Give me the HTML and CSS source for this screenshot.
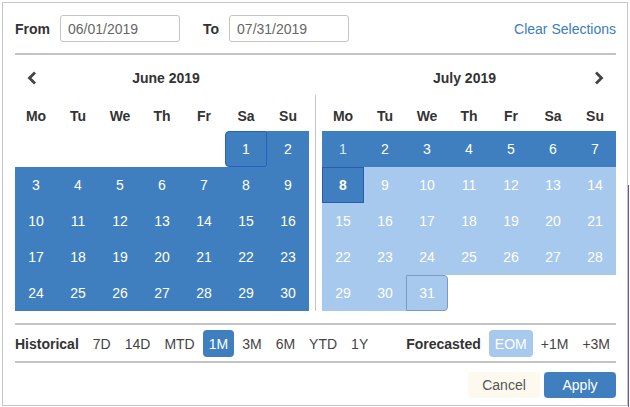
FILE: index.html
```html
<!DOCTYPE html>
<html>
<head>
<meta charset="utf-8">
<link rel="stylesheet" href="styles.css">
</head>
<body>
<div class="panel">
  <div class="range-row">
    <span class="lbl">From</span>
    <input class="date-input first" type="text" value="06/01/2019">
    <span class="lbl">To</span>
    <input class="date-input" type="text" value="07/31/2019">
    <a class="clear-link">Clear Selections</a>
  </div>
  <div class="rule rule-top"></div>

  <div class="calendars">
    <div class="month">
      <div class="month-head left">
        <svg class="chev chev-prev" width="10" height="14" viewBox="0 0 10 14"><path d="M8 1.5 L2.5 7 L8 12.5" fill="none" stroke="#444" stroke-width="2.8"/></svg>
        <span class="month-title">June 2019</span>
      </div>
      <div class="dow"><span>Mo</span><span>Tu</span><span>We</span><span>Th</span><span>Fr</span><span>Sa</span><span>Su</span></div>
      <div class="grid">
        <span class="cell empty"></span><span class="cell empty"></span><span class="cell empty"></span><span class="cell empty"></span><span class="cell empty"></span>
        <span class="cell dark start">1</span><span class="cell dark">2</span>
        <span class="cell dark">3</span><span class="cell dark">4</span><span class="cell dark">5</span><span class="cell dark">6</span><span class="cell dark">7</span><span class="cell dark">8</span><span class="cell dark">9</span>
        <span class="cell dark">10</span><span class="cell dark">11</span><span class="cell dark">12</span><span class="cell dark">13</span><span class="cell dark">14</span><span class="cell dark">15</span><span class="cell dark">16</span>
        <span class="cell dark">17</span><span class="cell dark">18</span><span class="cell dark">19</span><span class="cell dark">20</span><span class="cell dark">21</span><span class="cell dark">22</span><span class="cell dark">23</span>
        <span class="cell dark">24</span><span class="cell dark">25</span><span class="cell dark">26</span><span class="cell dark">27</span><span class="cell dark">28</span><span class="cell dark">29</span><span class="cell dark">30</span>
      </div>
    </div>

    <div class="sep"><div class="sep-line"></div></div>

    <div class="month">
      <div class="month-head right">
        <span class="month-title">July 2019</span>
        <svg class="chev chev-next" width="10" height="14" viewBox="0 0 10 14"><path d="M2 1.5 L7.5 7 L2 12.5" fill="none" stroke="#444" stroke-width="2.8"/></svg>
      </div>
      <div class="dow"><span>Mo</span><span>Tu</span><span>We</span><span>Th</span><span>Fr</span><span>Sa</span><span>Su</span></div>
      <div class="grid">
        <span class="cell dark dim">1</span><span class="cell dark">2</span><span class="cell dark">3</span><span class="cell dark">4</span><span class="cell dark">5</span><span class="cell dark">6</span><span class="cell dark">7</span>
        <span class="cell dark today">8</span><span class="cell light">9</span><span class="cell light">10</span><span class="cell light">11</span><span class="cell light">12</span><span class="cell light">13</span><span class="cell light">14</span>
        <span class="cell light">15</span><span class="cell light">16</span><span class="cell light">17</span><span class="cell light">18</span><span class="cell light">19</span><span class="cell light">20</span><span class="cell light">21</span>
        <span class="cell light">22</span><span class="cell light">23</span><span class="cell light">24</span><span class="cell light">25</span><span class="cell light">26</span><span class="cell light">27</span><span class="cell light">28</span>
        <span class="cell light">29</span><span class="cell light">30</span><span class="cell light end">31</span>
        <span class="cell empty"></span><span class="cell empty"></span><span class="cell empty"></span><span class="cell empty"></span>
      </div>
    </div>
  </div>

  <div class="rule rule-mid"></div>

  <div class="presets">
    <div class="group">
      <span class="group-lbl">Historical</span>
      <span class="pbtn">7D</span>
      <span class="pbtn">14D</span>
      <span class="pbtn">MTD</span>
      <span class="pbtn active">1M</span>
      <span class="pbtn">3M</span>
      <span class="pbtn">6M</span>
      <span class="pbtn">YTD</span>
      <span class="pbtn">1Y</span>
    </div>
    <div class="group">
      <span class="group-lbl">Forecasted</span>
      <span class="pbtn soft">EOM</span>
      <span class="pbtn">+1M</span>
      <span class="pbtn">+3M</span>
    </div>
  </div>

  <div class="rule"></div>

  <div class="actions">
    <button class="btn cancel">Cancel</button>
    <button class="btn apply">Apply</button>
  </div>
</div>
<div class="edge-mark"></div>
</body>
</html>
```

FILE: styles.css
```css
html, body {
  margin: 0;
  padding: 0;
  background: #fff;
}

body {
  font-family: "Liberation Sans", Arial, sans-serif;
  font-size: 14px;
  color: #333;
  width: 630px;
  height: 407px;
  overflow: hidden;
  position: relative;
}

.panel {
  box-sizing: border-box;
  margin: 2px 0 0 2px;
  width: 626px;
  height: 404px;
  border: 1px solid #c6c6c6;
  padding: 12px 11px 0 12px;
}

.range-row {
  display: flex;
  align-items: center;
  height: 27px;
}

.lbl {
  font-weight: bold;
  color: #333;
  margin-right: 10px;
}

.date-input {
  box-sizing: border-box;
  width: 120px;
  height: 27px;
  border: 1px solid #c4c4c4;
  border-radius: 3px;
  padding: 0 0 0 7px;
  font-family: "Liberation Sans", Arial, sans-serif;
  font-size: 14px;
  color: #666;
  outline: none;
}

.date-input.first {
  margin-right: 23px;
}

.clear-link {
  margin-left: auto;
  color: #3a7cc2;
  cursor: pointer;
}

.rule {
  height: 2px;
  background: #c4c4c4;
}

.rule-top {
  margin-top: 11px;
}

.calendars {
  display: flex;
}

.month {
  width: 294px;
}

.month-head {
  height: 45px;
  display: flex;
  align-items: center;
  position: relative;
}

.month-head.left {
  padding-left: 12px;
}

.month-head.right {
  padding-right: 12px;
  justify-content: flex-end;
}

.month-head.left .month-title {
  flex: 1;
  text-align: center;
  padding-right: 14px;
}

.month-head.right .month-title {
  flex: 1;
  text-align: center;
  padding-left: 13px;
}

.month-title {
  font-weight: bold;
  color: #333;
}

.chev {
  display: block;
}

.dow {
  display: grid;
  grid-template-columns: repeat(7, 42px);
  height: 31px;
  align-items: center;
  font-weight: bold;
  color: #333;
  text-align: center;
}

.grid {
  display: grid;
  grid-template-columns: repeat(7, 42px);
  grid-auto-rows: 36px;
}

.cell {
  box-sizing: border-box;
  display: flex;
  align-items: center;
  justify-content: center;
  color: #fff;
}

.cell.dark {
  background: #3f7fc0;
}

.cell.light {
  background: #a7c9ee;
}

.cell.dim {
  color: #d8e8f8;
}

.cell.start {
  border: 1px solid #2a5fbf;
  border-radius: 4px 0 0 4px;
}

.cell.today {
  border: 1px solid #2a5db2;
  font-weight: bold;
}

.cell.end {
  border: 1px solid #7b9cc2;
  border-radius: 0 4px 4px 0;
}

.sep {
  width: 13px;
  display: flex;
  justify-content: center;
}

.sep-line {
  width: 1px;
  margin-top: 40px;
  background: #c4c4c4;
}

.rule-mid {
  margin-top: 12px;
}

.presets {
  display: flex;
  justify-content: space-between;
  align-items: center;
  padding: 5px 0 4px;
}

.group {
  display: flex;
  align-items: center;
  gap: 2px;
}

.group-lbl {
  font-weight: bold;
  color: #333;
  margin-right: 6px;
}

.pbtn {
  height: 27px;
  padding: 0 6px;
  border-radius: 4px;
  display: flex;
  align-items: center;
  color: #444;
}

.pbtn.active {
  background: #3f7fc0;
  color: #fff;
}

.pbtn.soft {
  background: #a7c9ee;
  color: #fff;
}

.actions {
  display: flex;
  justify-content: flex-end;
  gap: 4px;
  margin-top: 9px;
}

.btn {
  width: 72px;
  height: 26px;
  border: none;
  border-radius: 4px;
  font-family: "Liberation Sans", Arial, sans-serif;
  font-size: 14px;
  padding: 0;
}

.btn.cancel {
  background: #fdf9ee;
  color: #555;
}

.btn.apply {
  background: #3f7fc0;
  color: #fff;
}

.edge-mark {
  position: absolute;
  left: 628px;
  top: 185px;
  width: 1px;
  height: 222px;
  background: #6a52b8;
}
```
